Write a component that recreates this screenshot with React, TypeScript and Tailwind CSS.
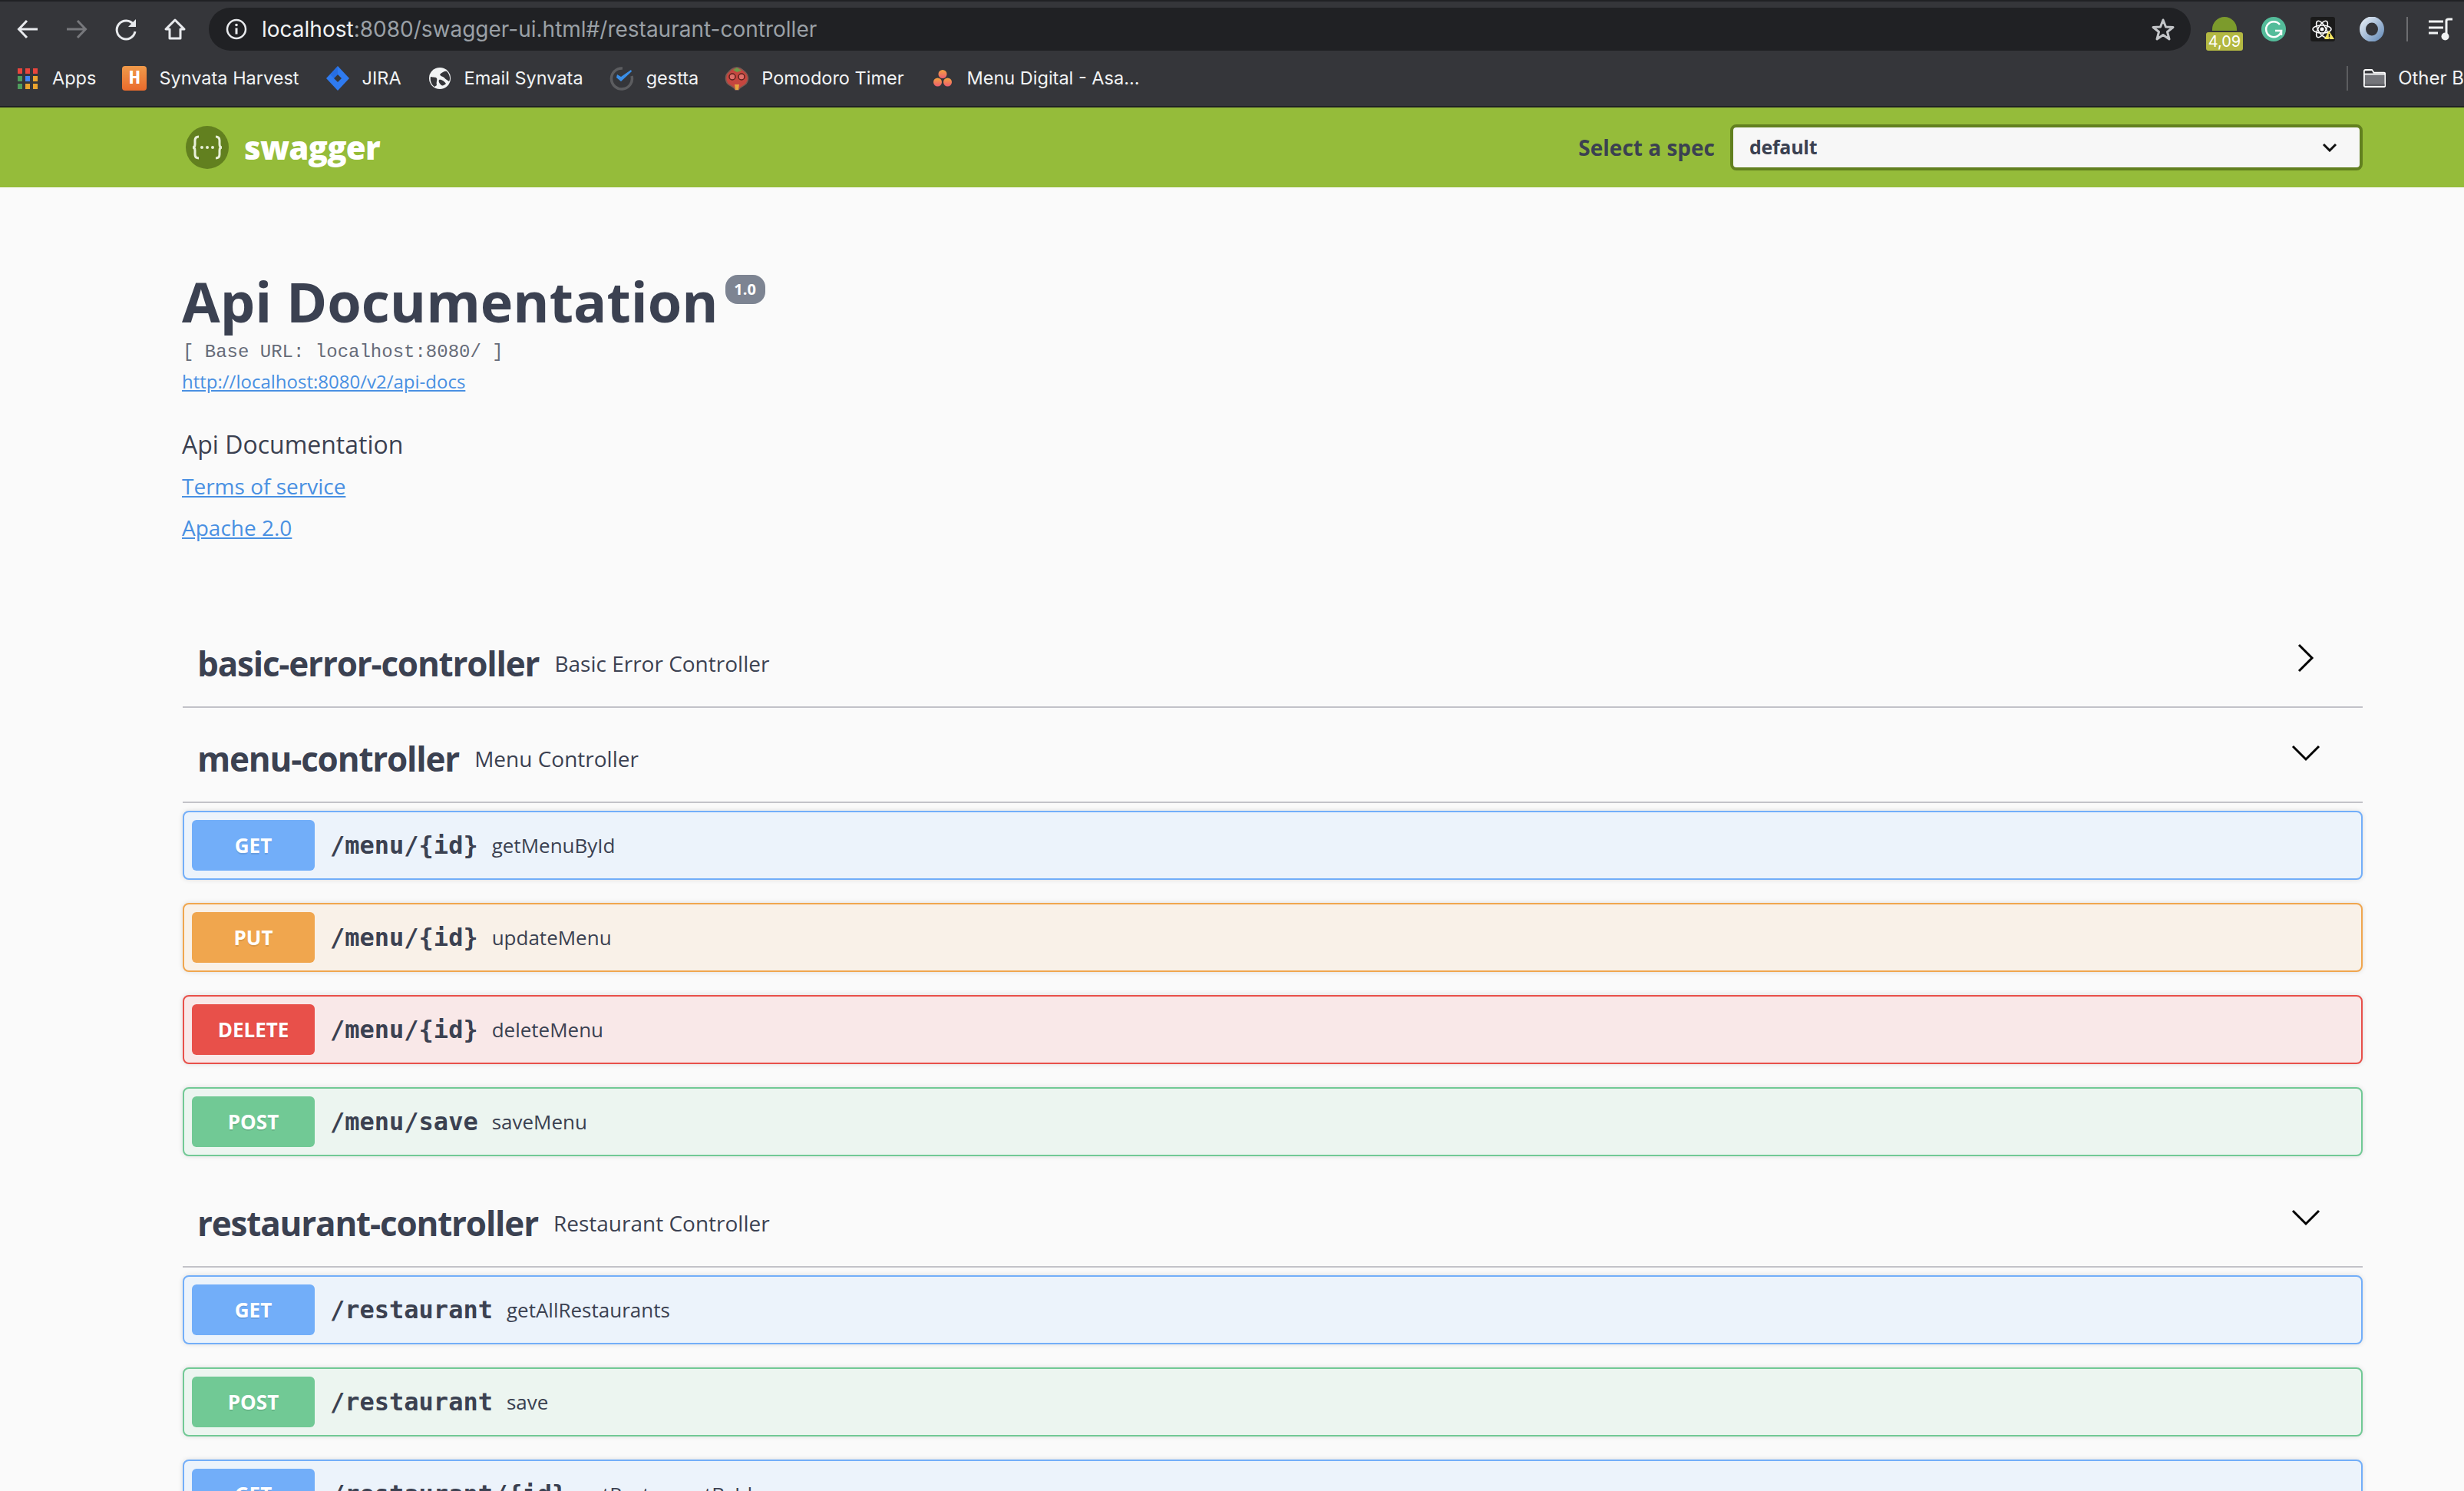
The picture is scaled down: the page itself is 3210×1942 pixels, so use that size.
import React from 'react';

const AppsIcon = () => {
  const colors = ['#e8453c', '#e8453c', '#e8453c', '#4f9d5d', '#4285f4', '#eba42e', '#4f9d5d', '#eba42e', '#eba42e'];
  return (
    <div className="grid grid-cols-3 gap-x-[4px] gap-y-[3px] w-[26px]">
      {colors.map((c, i) => (
        <div key={i} className="h-[7px] w-[6px]" style={{ backgroundColor: c }} />
      ))}
    </div>
  );
};

const HarvestIcon = () => (
  <div className="w-8 h-8 rounded-[4px] bg-gradient-to-b from-[#f09a4a] to-[#e96a2c] flex items-center justify-center text-white font-bold text-[26px] leading-none font-['Liberation_Mono',monospace]">
    H
  </div>
);

const JiraIcon = () => (
  <svg width="32" height="32" viewBox="0 0 32 32">
    <path d="M16 0 L31 16 L16 32 L1 16 Z" fill="#2f7bf0" />
    <path d="M16 11 L21 16 L16 21 L11 16 Z" fill="#35363a" />
    <path d="M16 0 L16 11 L11 16 L6 11 Z" fill="#1f5fd0" opacity="0.45" />
  </svg>
);

const GlobeIcon = () => (
  <svg width="32" height="32" viewBox="0 0 32 32">
    <circle cx="16" cy="16" r="14" fill="#f1f3f4" />
    <path d="M16 11 C19 8 23 6 25 7 C29 11 30 17 28 20 C24 18 22 15 20 14 C18 13 17 13 16 11 Z" fill="#35363a" />
    <path d="M15 18 C18 17 22 20 24 23 C21 26 18 26 17 24 C15 22 14 20 15 18 Z" fill="#35363a" />
    <path d="M4 14 C8 15 11 14 12 16 C13 18 11 21 12 25 L9 27 C5 24 3 19 4 14 Z" fill="#35363a" />
  </svg>
);

const GesttaIcon = () => (
  <svg width="32" height="32" viewBox="0 0 32 32" fill="none">
    <path d="M17 3 A13.5 13.5 0 1 0 29 13" stroke="#5c5d60" strokeWidth="3.5" />
    <path d="M9 15 L15 20 L29 7 L28 5 L15 14 L10 11 Z" fill="#3a8ee6" />
  </svg>
);

const TomatoIcon = () => (
  <svg width="32" height="32" viewBox="0 0 32 32">
    <path d="M16 2 C22 2 24 6 27 8 C31 12 32 18 28 23 C24 27 20 27 18 31 L14 31 C12 27 7 26 4 23 C0 18 1 11 5 8 C8 5 10 2 16 2 Z" fill="#c5463f" stroke="#7a5a52" strokeWidth="1.5" />
    <path d="M11 5 L16 2 L22 6 L16 8 Z" fill="#6d9b4a" />
    <circle cx="10" cy="14" r="4" fill="#e0706a" stroke="#5a1f1c" strokeWidth="1.5" />
    <circle cx="22" cy="14" r="4" fill="#e0706a" stroke="#5a1f1c" strokeWidth="1.5" />
    <path d="M13 24 L19 24 L18 31 L14 31 Z" fill="#e8a53f" />
  </svg>
);

const AsanaIcon = () => (
  <svg width="32" height="32" viewBox="0 0 32 32">
    <defs>
      <linearGradient id="asana" x1="0" y1="0" x2="0" y2="1">
        <stop offset="0" stopColor="#f4a23f" />
        <stop offset="1" stopColor="#ec5d70" />
      </linearGradient>
    </defs>
    <circle cx="16" cy="10.5" r="5.5" fill="url(#asana)" />
    <circle cx="9.500" cy="21" r="5.5" fill="url(#asana)" />
    <circle cx="22.500" cy="21" r="5.500" fill="url(#asana)" />
  </svg>
);

const FolderIcon = () => (
  <svg width="32" height="26" viewBox="0 0 32 26" fill="none">
    <path d="M1 3 Q1 1 3 1 L12 1 L15 5 L29 5 Q31 5 31 7 L31 23 Q31 25 29 25 L3 25 Q1 25 1 23 Z" fill="#74757a" stroke="#fff" strokeWidth="2" />
    <path d="M2 3 L12 2 L14 7 L30 7 L2 7 Z" fill="#35363a" />
    <path d="M1 7 L31 7" stroke="#fff" strokeWidth="2" />
    <path d="M2 21 L30 21 L30 24 L2 24 Z" fill="#5f6064" />
  </svg>
);

const Bookmark = ({ icon, label }: { icon: React.ReactNode; label: string }) => (
  <div className="flex items-center gap-4">
    <div className="w-8 h-8 flex items-center justify-center">{icon}</div>
    <span className="text-[23.5px] leading-none text-[#f1f3f4] whitespace-nowrap">{label}</span>
  </div>
);

const BrowserChrome = () => (
  <div className="bg-[#35363a] font-['Inter',sans-serif]">
    <div className="h-[2px] bg-[#202124]" />
    <div className="flex items-start pt-2 pl-5 pr-[14px] h-[64px]">
      <div className="flex items-center gap-8 h-[56px] text-[#e8eaed]">
        <svg width="32" height="32" viewBox="0 0 32 32" fill="none" stroke="currentColor" strokeWidth="3">
          <path d="M29 16 H5 M15 5 L4.500 16 L15 27" />
        </svg>
        <svg width="32" height="32" viewBox="0 0 32 32" fill="none" stroke="#77787c" strokeWidth="3">
          <path d="M3 16 H27 M17 5 L27.500 16 L17 27" />
        </svg>
        <svg width="32" height="32" viewBox="0 0 32 32" fill="none" stroke="currentColor" strokeWidth="3">
          <path d="M26 10 A12 12 0 1 0 28 19" />
          <path d="M29 3 V13 H19 Z" fill="currentColor" stroke="none" />
        </svg>
        <svg width="32" height="32" viewBox="0 0 32 32" fill="none" stroke="currentColor" strokeWidth="3">
          <path d="M16 4 L4 16 H9 V28 H23 V16 H28 Z" strokeLinejoin="round" />
        </svg>
      </div>
      <div className="ml-7 flex-1 h-[56px] rounded-[28px] bg-[#202124] flex items-center pl-[22px] pr-[20px]">
        <svg width="28" height="28" viewBox="0 0 28 28" fill="none" className="text-[#e8eaed]">
          <circle cx="14" cy="14" r="12" stroke="currentColor" strokeWidth="2.500" />
          <path d="M14 12.500 V20.500" stroke="currentColor" strokeWidth="3" />
          <circle cx="14" cy="8.500" r="1.800" fill="currentColor" />
        </svg>
        <div className="ml-[19px] text-[28px] leading-none whitespace-nowrap">
          <span className="text-[#f1f3f4]">localhost</span>
          <span className="text-[#9aa0a6]">:8080/swagger-ui.html#/restaurant-controller</span>
        </div>
        <svg width="32" height="32" viewBox="0 0 32 32" fill="none" stroke="#c4c6c9" strokeWidth="3" className="ml-auto" strokeLinejoin="round">
          <path d="M16 4 L19.500 13 L29 13.500 L21.500 19.500 L24 29 L16 23.500 L8 29 L10.500 19.500 L3 13.500 L12.500 13 Z" />
        </svg>
      </div>
      <div className="ml-5 relative w-12 h-[56px]">
        <div className="absolute left-2 top-[12px] w-8 h-[18px] rounded-t-full bg-[#7c9b2c]" />
        <div className="absolute left-0 bottom-0 w-12 h-6 rounded-[3px] bg-[#b3b842] text-white text-[20px] leading-6 text-center">4,09</div>
      </div>
      <div className="ml-6 flex items-start gap-8 pt-3">
        <svg width="32" height="32" viewBox="0 0 32 32" fill="none">
          <circle cx="16" cy="16" r="16" fill="#54bc9a" />
          <path d="M24 10 A10 10 0 1 0 26 18 H18" stroke="#fff" strokeWidth="2.500" />
          <path d="M26 18 V24" stroke="#fff" strokeWidth="2.500" />
        </svg>
        <svg width="32" height="32" viewBox="0 0 32 32" fill="none" className="rounded-[3px] bg-[#1a1a1a]">
          <g stroke="#fff" strokeWidth="1.500">
            <ellipse cx="15" cy="16" rx="12" ry="5" />
            <ellipse cx="15" cy="16" rx="12" ry="5" transform="rotate(60 15 16)" />
            <ellipse cx="15" cy="16" rx="12" ry="5" transform="rotate(120 15 16)" />
          </g>
          <circle cx="15" cy="16" r="2.500" fill="#fff" />
          <path d="M24 18 L31 29 H18 Z" fill="#f5e663" />
          <path d="M24.500 22 V26 M24.500 27 V28.200" stroke="#1a1a1a" strokeWidth="1.500" />
        </svg>
        <svg width="32" height="32" viewBox="0 0 32 32" fill="none">
          <defs>
            <linearGradient id="ring" x1="0" y1="0" x2="1" y2="1">
              <stop offset="0" stopColor="#dfe8f2" />
              <stop offset="1" stopColor="#6f93bd" />
            </linearGradient>
          </defs>
          <ellipse cx="16" cy="16" rx="12" ry="12.500" stroke="url(#ring)" strokeWidth="8" />
          <ellipse cx="16" cy="16" rx="5" ry="8" fill="#35363a" />
        </svg>
      </div>
      <div className="ml-[29px] mt-3 w-[2px] h-8 bg-[#6c6d70]" />
      <svg width="32" height="32" viewBox="0 0 32 32" fill="none" className="ml-[27px] mt-3" stroke="#f1f3f4" strokeWidth="3">
        <path d="M0 6 H19 M0 14 H19 M0 21 H12" />
        <path d="M23 25 V5 Q23 3 26 3 H31" />
        <circle cx="21.500" cy="25.500" r="5" fill="#f1f3f4" stroke="none" />
      </svg>
    </div>
    <div className="flex items-center justify-between h-[72px] pl-5">
      <div className="flex items-center gap-[34px]">
        <Bookmark icon={<AppsIcon />} label="Apps" />
        <Bookmark icon={<HarvestIcon />} label="Synvata Harvest" />
        <Bookmark icon={<JiraIcon />} label="JIRA" />
        <Bookmark icon={<GlobeIcon />} label="Email Synvata" />
        <Bookmark icon={<GesttaIcon />} label="gestta" />
        <Bookmark icon={<TomatoIcon />} label="Pomodoro Timer" />
        <Bookmark icon={<AsanaIcon />} label="Menu Digital - Asa..." />
      </div>
      <div className="flex items-center w-[153px] overflow-hidden">
        <div className="w-[2px] h-8 bg-[#5c5d60] mr-5" />
        <FolderIcon />
        <span className="ml-4 text-[24px] leading-none text-[#f1f3f4] whitespace-nowrap">Other B</span>
      </div>
    </div>
    <div className="h-[2px] bg-[#202124]" />
  </div>
);

const SwaggerBar = () => (
  <div className="h-[104px] bg-[#95bc3a] flex items-center pl-[242px] pr-[132px] font-['Open_Sans',sans-serif]">
    <svg width="56" height="56" viewBox="0 0 56 56" fill="none">
      <circle cx="28" cy="28" r="28" fill="#62801f" />
      <path d="M17 14 Q12 14 12 19 V24 Q12 28 9 28 Q12 28 12 32 V37 Q12 42 17 42 M39 14 Q44 14 44 19 V24 Q44 28 47 28 Q44 28 44 32 V37 Q44 42 39 42" stroke="#e8efd8" strokeWidth="3" />
      <circle cx="21" cy="28" r="2" fill="#e8efd8" />
      <circle cx="28" cy="28" r="2" fill="#e8efd8" />
      <circle cx="35" cy="28" r="2" fill="#e8efd8" />
    </svg>
    <span className="ml-5 text-[42px] leading-none font-extrabold text-white tracking-[-0.02em]">swagger</span>
    <span className="ml-auto text-[28px] font-bold text-[#3b4151]">Select a spec</span>
    <div className="ml-5 w-[824px] h-[60px] rounded-[8px] border-4 border-[#62801f] bg-[#f7f7f7] flex items-center justify-between pl-[21px] pr-[29px]">
      <span className="text-[25px] tracking-[-0.3px] font-bold text-[#3b4151]">default</span>
      <svg width="20" height="12" viewBox="0 0 20 12" fill="none" stroke="#111" strokeWidth="3">
        <path d="M2 2 L10 10 L18 2" />
      </svg>
    </div>
  </div>
);

const methodStyles = {
  GET: { row: 'border-[#72aef9] bg-[#ecf3fb]', badge: 'bg-[#72aef9]' },
  PUT: { row: 'border-[#f0a64e] bg-[#f9f1e8]', badge: 'bg-[#f0a64e]' },
  DELETE: { row: 'border-[#e8504a] bg-[#f9e8e8]', badge: 'bg-[#e8504a]' },
  POST: { row: 'border-[#71c995] bg-[#ecf5f0]', badge: 'bg-[#71c995]' },
};

const Operation = ({ method, path, summary }: { method: keyof typeof methodStyles; path: string; summary: string }) => (
  <div className={`h-[90px] rounded-[8px] border-2 flex items-center pl-[10px] shadow-[0_0_6px_rgba(0,0,0,0.12)] ${methodStyles[method].row}`}>
    <div className={`w-[160px] h-[66px] rounded-[6px] flex items-center justify-center text-white text-[26px] font-bold [text-shadow:0_2px_0_rgba(0,0,0,0.1)] ${methodStyles[method].badge}`}>
      {method}
    </div>
    <span className="ml-[20px] text-[32px] leading-none font-bold text-[#3b4151] font-['DejaVu_Sans_Mono',monospace] whitespace-nowrap">{path}</span>
    <span className="ml-[18px] text-[26px] text-[#3b4151]">{summary}</span>
  </div>
);

const TagHeader = ({ name, description, open }: { name: string; description: string; open: boolean }) => (
  <div className="h-[124px] border-b-2 border-[#c2c2c8] flex items-center pl-[19px] pr-[56px] pt-[10px]">
    <span className="text-[44px] tracking-[-1.2px] font-bold text-[#3b4151] whitespace-nowrap">{name}</span>
    <span className="ml-5 text-[28px] text-[#3b4151] whitespace-nowrap">{description}</span>
    {open ? (
      <svg width="38" height="22" viewBox="0 0 38 22" fill="none" stroke="#000" strokeWidth="3" className="ml-auto -mt-[15px] -mr-[1px]">
        <path d="M2 2 L19 19 L36 2" />
      </svg>
    ) : (
      <svg width="22" height="38" viewBox="0 0 22 38" fill="none" stroke="#000" strokeWidth="3" className="ml-auto -mt-[15px] mr-[7px]">
        <path d="M2 2 L19 19 L2 36" />
      </svg>
    )}
  </div>
);

const App = () => {
  return (
    <div className="w-[3210px] h-[1942px] overflow-hidden bg-[#fafafa]">
      <BrowserChrome />
      <SwaggerBar />
      <div className="w-[2840px] ml-[238px] font-['Open_Sans',sans-serif] text-[#3b4151]">
        <div className="pt-[100px] flex items-start">
          <h1 className="text-[72px] leading-[96px] font-bold -ml-[1px] whitespace-nowrap">Api Documentation</h1>
          <span className="ml-[9px] mt-[14px] w-[52px] h-[38px] rounded-[16px] bg-[#7d8492] text-white text-[20px] leading-[38px] font-bold text-center">1.0</span>
        </div>
        <div className="pt-[3px] text-[24px] leading-[32px] font-['Liberation_Mono',monospace] text-[#666b78] whitespace-pre">[ Base URL: localhost:8080/ ]</div>
        <a className="block -ml-[1px] mt-[4px] text-[24px] leading-[36px] text-[#4990e2] underline">http://localhost:8080/v2/api-docs</a>
        <p className="-ml-[1px] mt-[40px] text-[32px] leading-[48px]">Api Documentation</p>
        <a className="block -ml-[1px] mt-[6px] text-[28px] leading-[48px] text-[#4990e2] underline">Terms of service</a>
        <a className="block -ml-[1px] mt-[6px] text-[28px] leading-[48px] text-[#4990e2] underline">Apache 2.0</a>
        <div className="mt-[87px]">
          <TagHeader name="basic-error-controller" description="Basic Error Controller" open={false} />
          <TagHeader name="menu-controller" description="Menu Controller" open />
          <div className="mt-[10px] flex flex-col gap-[30px]">
            <Operation method="GET" path="/menu/{id}" summary="getMenuById" />
            <Operation method="PUT" path="/menu/{id}" summary="updateMenu" />
            <Operation method="DELETE" path="/menu/{id}" summary="deleteMenu" />
            <Operation method="POST" path="/menu/save" summary="saveMenu" />
          </div>
          <div className="mt-[21px]">
            <TagHeader name="restaurant-controller" description="Restaurant Controller" open />
          </div>
          <div className="mt-[10px] flex flex-col gap-[30px]">
            <Operation method="GET" path="/restaurant" summary="getAllRestaurants" />
            <Operation method="POST" path="/restaurant" summary="save" />
            <Operation method="GET" path="/restaurant/{id}" summary="getRestaurantById" />
          </div>
        </div>
      </div>
    </div>
  );
};

export default App;
